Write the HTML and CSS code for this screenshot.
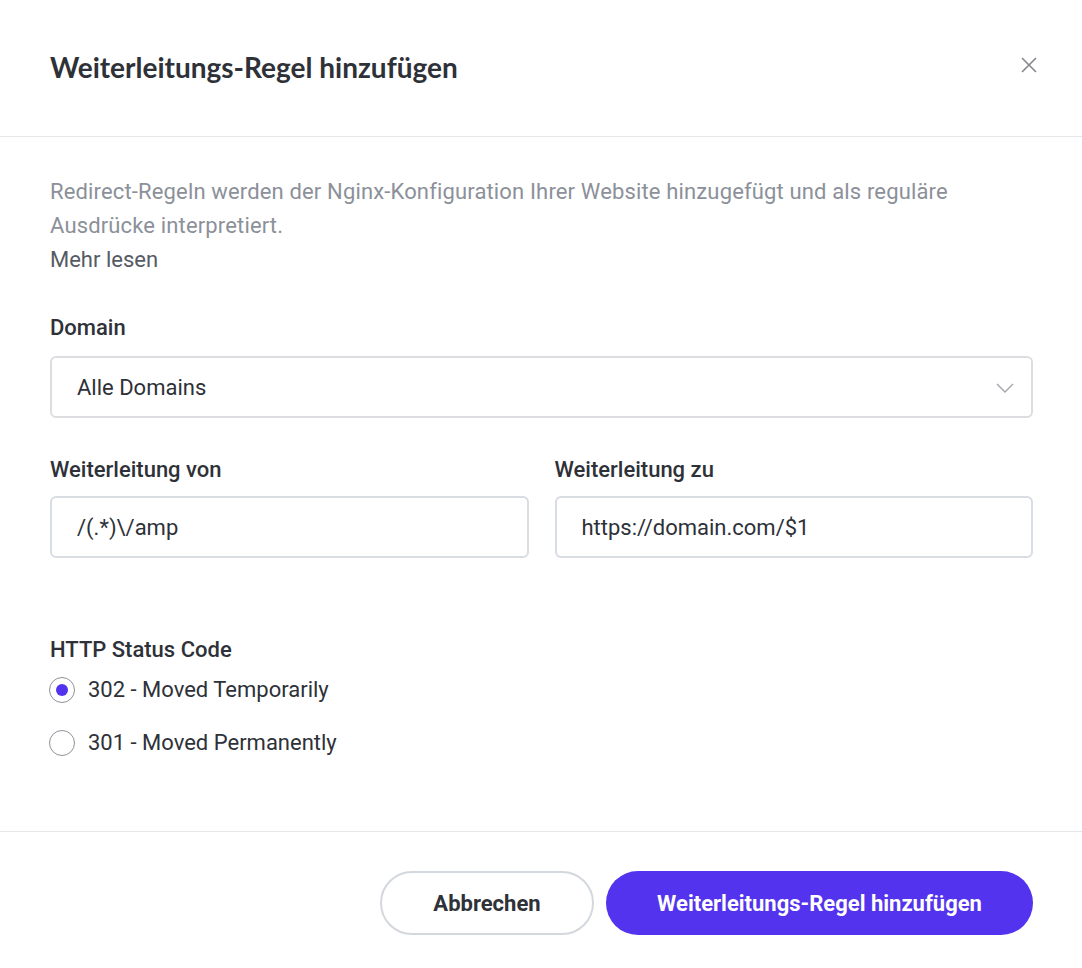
FILE: index.html
```html
<!DOCTYPE html>
<html lang="de">
<head>
<meta charset="utf-8">
<title>Weiterleitungs-Regel hinzufügen</title>
<link rel="stylesheet" href="styles.css">
</head>
<body>
<div class="modal">
  <header class="modal-header">
    <h1 class="modal-title">Weiterleitungs-Regel hinzufügen</h1>
    <button class="close" aria-label="Schließen">
      <svg width="16" height="16" viewBox="0 0 16 16"><path d="M1 1L15 15M15 1L1 15" stroke="#85878c" stroke-width="1.6" fill="none"/></svg>
    </button>
  </header>
  <main class="modal-body">
    <p class="desc">Redirect-Regeln werden der Nginx-Konfiguration Ihrer Website hinzugefügt und als reguläre Ausdrücke interpretiert.</p>
    <a class="more" href="#">Mehr lesen</a>

    <div class="field field-domain">
      <label class="label">Domain</label>
      <div class="select">
        <span>Alle Domains</span>
        <svg class="chevron" width="18" height="10" viewBox="0 0 18 10"><path d="M1 1L9 9L17 1" stroke="#a3a5aa" stroke-width="1.4" fill="none"/></svg>
      </div>
    </div>

    <div class="row">
      <div class="field">
        <label class="label">Weiterleitung von</label>
        <div class="input">/(.*)\/amp</div>
      </div>
      <div class="field">
        <label class="label">Weiterleitung zu</label>
        <div class="input">https://domain.com/$1</div>
      </div>
    </div>

    <div class="status">
      <div class="label">HTTP Status Code</div>
      <div class="radio-row"><span class="radio checked"></span><span>302 - Moved Temporarily</span></div>
      <div class="radio-row"><span class="radio"></span><span>301 - Moved Permanently</span></div>
    </div>
  </main>
  <footer class="modal-footer">
    <button class="btn btn-secondary">Abbrechen</button>
    <button class="btn btn-primary">Weiterleitungs-Regel hinzufügen</button>
  </footer>
</div>
</body>
</html>
```

FILE: styles.css
```css
* { box-sizing: border-box; }
html, body { margin: 0; padding: 0; background: #fff; }
body {
  font-family: Roboto, "Liberation Sans", sans-serif;
  color: #2e3138;
  width: 1082px;
  height: 968px;
  overflow: hidden;
}
.modal { display: flex; flex-direction: column; height: 968px; }
.modal-header {
  height: 137px;
  border-bottom: 1px solid #e6e7ea;
  display: flex;
  align-items: center;
  justify-content: space-between;
  padding: 0 45px 0 50px;
}
.modal-title {
  margin: 0;
  font-family: Lato, "Open Sans", sans-serif;
  font-weight: 700;
  font-size: 28px;
  color: #2e3138;
  position: relative;
  top: -1px;
}
.close {
  border: 0; background: none; padding: 0; width: 16px; height: 16px;
  display: flex; position: relative; top: -3px; cursor: pointer;
}
.modal-body {
  flex: 1;
  padding: 38px 49px 0 50px;
  font-size: 22px;
}
.desc {
  margin: 0;
  line-height: 34px;
  color: #8b9099;
  letter-spacing: 0.15px;
}
.more {
  display: block;
  line-height: 34px;
  color: #555a63;
  text-decoration: none;
}
.label {
  display: block;
  font-weight: 500;
  font-size: 22px;
  line-height: 28px;
  color: #2e3138;
  margin-bottom: 14px;
}
.field-domain { margin-top: 37px; }
.select, .input {
  height: 62px;
  border: 2px solid #dcdde0;
  border-radius: 6px;
  display: flex;
  align-items: center;
  padding: 0 17px 0 25px;
  font-size: 22px;
  color: #2e3138;
}
.select { justify-content: space-between; }
.chevron { margin-top: 2px; }
.input { border-color: #d8dce3; }
.row {
  display: grid;
  grid-template-columns: 1fr 1fr;
  gap: 26px;
  margin-top: 38px;
}
.row .label { margin-bottom: 12px; }
.status { margin-top: 78px; }
.status .label { margin-bottom: 0; }
.radio-row {
  display: flex;
  align-items: center;
  gap: 13px;
  height: 26px;
  margin-top: 13px;
  line-height: 26px;
}
.radio-row + .radio-row { margin-top: 27px; }
.radio {
  width: 26px; height: 26px;
  flex: none;
  border-radius: 50%;
  border: 1.5px solid #8f929a;
  display: inline-flex;
  align-items: center;
  justify-content: center;
  margin-left: -1px;
}
.radio.checked::after {
  content: "";
  width: 12px; height: 12px;
  border-radius: 50%;
  background: #5333ed;
}
.modal-footer {
  border-top: 1px solid #e6e7ea;
  height: 137px;
  display: flex;
  justify-content: flex-end;
  gap: 12px;
  padding: 39px 49px 0 0;
}
.btn {
  height: 64px;
  border-radius: 32px;
  font-family: Roboto, "Liberation Sans", sans-serif;
  font-size: 22px;
  font-weight: 700;
  cursor: pointer;
}
.btn-secondary {
  width: 214px;
  background: #fff;
  border: 2px solid #d3d7de;
  color: #2e3138;
}
.btn-primary {
  width: 427px;
  background: #5333ed;
  border: 0;
  color: #fff;
}
```
